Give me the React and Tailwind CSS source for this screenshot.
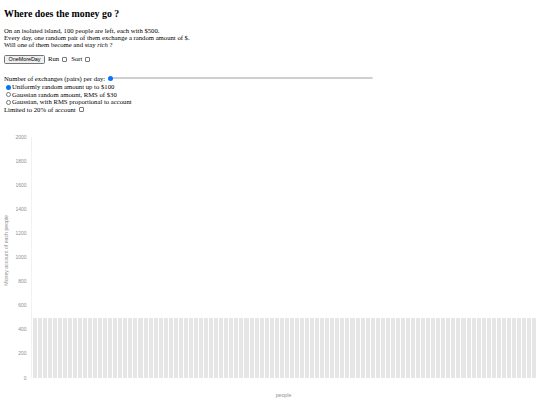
import React from "react";

const ticks = ["2000", "1800", "1600", "1400", "1200", "1000", "800", "600", "400", "200", "0"];
const people = Array.from({ length: 100 }, () => 500);

function Box() {
  return <span className="inline-block w-[5px] h-[5px] border-[0.7px] border-[#767676] rounded-[1px] bg-white" />;
}

function Radio({ on }) {
  return on ? (
    <span className="inline-block w-[5px] h-[5px] rounded-full bg-[#0075ff]" />
  ) : (
    <span className="inline-block w-[5px] h-[5px] rounded-full border-[0.7px] border-[#767676] bg-white" />
  );
}

export default function App() {
  return (
    <div className="w-[540px] h-[405px] overflow-hidden bg-white text-black font-['Liberation_Serif',serif]">
      <div className="px-[4px]">
        <h2 className="pt-[8px] text-[9.9px] leading-[12px] font-bold">Where does the money go ?</h2>
        <p className="mt-[7px] text-[6.7px] leading-[7.2px]">
          On an isolated island, 100 people are left, each with $500.
          <br />
          Every day, one random pair of them exchange a random amount of $.
          <br />
          Will one of them become and stay <i>rich</i> ?
        </p>
        <div className="mt-[6px] flex items-center gap-[2px] text-[6.7px] leading-[8px]">
          <span className="h-[9px] w-[41px] flex items-center justify-center rounded-[1.5px] border-[0.7px] border-[#767676] bg-[#efefef] font-['Liberation_Sans',sans-serif] text-[5.4px]">
            OneMoreDay
          </span>
          <span className="ml-[1px]">Run</span>
          <span className="ml-[1px] flex"><Box /></span>
          <span className="ml-[2px]">Sort</span>
          <span className="ml-[1px] flex"><Box /></span>
        </div>
        <div className="mt-[11px] flex items-center text-[6.7px] leading-[7.6px]">
          <span>Number of exchanges (pairs) per day:</span>
          <span className="relative ml-[3px] flex items-center w-[265px] h-[7px]">
            <span className="w-full h-[2px] rounded-full bg-[#e6e6e6] border-[0.5px] border-[#cfcfcf]" />
            <span className="absolute left-0 top-[1px] w-[5px] h-[5px] rounded-full bg-[#0075ff]" />
          </span>
        </div>
        <div className="mt-[1px] text-[6.7px] leading-[7.6px]">
          <div className="flex items-center gap-[1px] pl-[2px]"><Radio on />Uniformly random amount up to $100</div>
          <div className="flex items-center gap-[1px] pl-[2px]"><Radio />Gaussian random amount, RMS of $30</div>
          <div className="flex items-center gap-[1px] pl-[2px]"><Radio />Gaussian, with RMS proportional to account</div>
          <div className="flex items-center gap-[3px]">Limited to 20% of account <Box /></div>
        </div>
      </div>

      <div className="mt-[21px] flex items-start font-['Liberation_Sans',sans-serif] text-[#8f8f8f]">
        <div className="w-[14px] h-[246px] pb-[14px] flex items-center justify-center">
          <span className="[writing-mode:vertical-rl] rotate-180 text-[5.2px] leading-[5.5px] whitespace-nowrap">
            Money account of each people
          </span>
        </div>
        <div className="w-[12.5px] h-[246px] flex flex-col justify-between items-end text-[5px] leading-[5px]">
          {ticks.map((t) => (
            <span key={t}>{t}</span>
          ))}
        </div>
        <div className="ml-[4.5px] w-[505px]">
          <div className="mt-[2.5px] h-[241px] border-l border-[#f1f1f1] flex items-end gap-[1px] pl-[0.5px]">
            {people.map((v, i) => (
              <div key={i} className="flex-1 bg-[#e6e6e6]" style={{ height: `${(v / 2000) * 100}%` }} />
            ))}
          </div>
          <div className="mt-[15px] text-center text-[5.2px] leading-[5.5px]">people</div>
        </div>
      </div>
    </div>
  );
}
